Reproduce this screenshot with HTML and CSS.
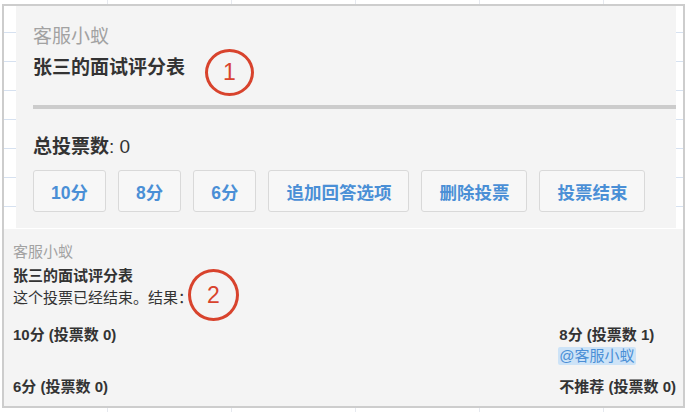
FILE: index.html
```html
<!DOCTYPE html>
<html lang="zh-CN">
<head>
<meta charset="utf-8">
<title>投票</title>
<link rel="stylesheet" href="styles.css">
</head>
<body>
<div class="frame">
  <section class="card card-edit">
    <div class="author">客服小蚁</div>
    <div class="title">张三的面试评分表</div>
    <div class="bar"></div>
    <div class="total"><b>总投票数</b>: 0</div>
    <div class="actions">
      <button class="btn">10分</button>
      <button class="btn">8分</button>
      <button class="btn">6分</button>
      <button class="btn">追加回答选项</button>
      <button class="btn">删除投票</button>
      <button class="btn">投票结束</button>
    </div>
    <div class="mark mark-1">1</div>
  </section>
  <section class="card card-result">
    <div class="author">客服小蚁</div>
    <div class="title">张三的面试评分表</div>
    <div class="note">这个投票已经结束。结果：</div>
    <div class="results">
      <div class="opt">10分 (投票数 0)</div>
      <div class="opt">8分 (投票数 1)<div class="voters"><span class="mention">@客服小蚁</span></div></div>
      <div class="opt">6分 (投票数 0)</div>
      <div class="opt">不推荐 (投票数 0)</div>
    </div>
    <div class="mark mark-2">2</div>
  </section>
</div>
</body>
</html>
```

FILE: styles.css
```css
html, body {
  margin: 0;
  padding: 0;
}
body {
  width: 692px;
  height: 412px;
  overflow: hidden;
  font-family: "Liberation Sans", "Noto Sans CJK SC", sans-serif;
  color: #333;
  background: #fff repeating-linear-gradient(to right, transparent 0 123px, #e6e9ef 123px 124px);
  background-position: -16px 0;
}
.frame {
  margin: 4px 0 0 2px;
  width: 679px;
  border: 2px solid #cdcdcd;
  background: #fff repeating-linear-gradient(to bottom, transparent 0 28px, #d6e1f0 28px 29px);
  background-position: 0 -2px;
  position: relative;
}
.card {
  background: #f4f4f4;
  position: relative;
}
.card-edit {
  margin: 0 7px 0 12px;
  padding: 18px 0 16px 17px;
}
.card-edit .author {
  font-size: 19px;
  line-height: 26px;
  color: #a2a2a2;
}
.card-edit .title {
  margin-top: 5px;
  font-size: 19px;
  line-height: 26px;
  font-weight: bold;
  color: #333;
}
.bar {
  margin-top: 24px;
  height: 4px;
  background: #cccccc;
}
.total {
  margin-top: 25px;
  font-size: 19px;
  line-height: 26px;
}
.total b {
  font-weight: bold;
}
.actions {
  margin-top: 10px;
  display: flex;
  gap: 12px;
}
.btn {
  height: 42px;
  padding: 0 17px;
  font-family: inherit;
  font-size: 17.5px;
  font-weight: bold;
  color: #4a8fd6;
  background: #f7f7f7;
  border: 1px solid #d9d9d9;
  border-radius: 3px;
}
.card-result {
  margin-top: 1px;
  padding: 11px 7px 8px 9px;
  font-size: 15px;
  line-height: 23px;
}
.card-result .author {
  color: #a2a2a2;
}
.card-result .title {
  margin-top: 1px;
  font-weight: bold;
}
.card-result .note {
  margin-top: -1px;
}
.results {
  margin-top: 14px;
  display: grid;
  grid-template-columns: 1fr auto;
  row-gap: 9px;
}
.opt {
  font-weight: bold;
}
.voters {
  font-weight: normal;
  line-height: 20px;
}
.mention {
  display: inline-block;
  margin-left: -1px;
  padding: 0 1px;
  line-height: 18px;
  background: #cde3f7;
  color: #4a8fd6;
  border-radius: 2px;
}
.mark {
  position: absolute;
  box-sizing: border-box;
  border: 3px solid #d8432d;
  border-radius: 50%;
  color: #d8432d;
  font-size: 23px;
  display: flex;
  align-items: center;
  justify-content: center;
}
.mark-1 {
  left: 189px;
  top: 43px;
  width: 49px;
  height: 47px;
}
.mark-2 {
  left: 184px;
  top: 40px;
  width: 51px;
  height: 52px;
}
```
